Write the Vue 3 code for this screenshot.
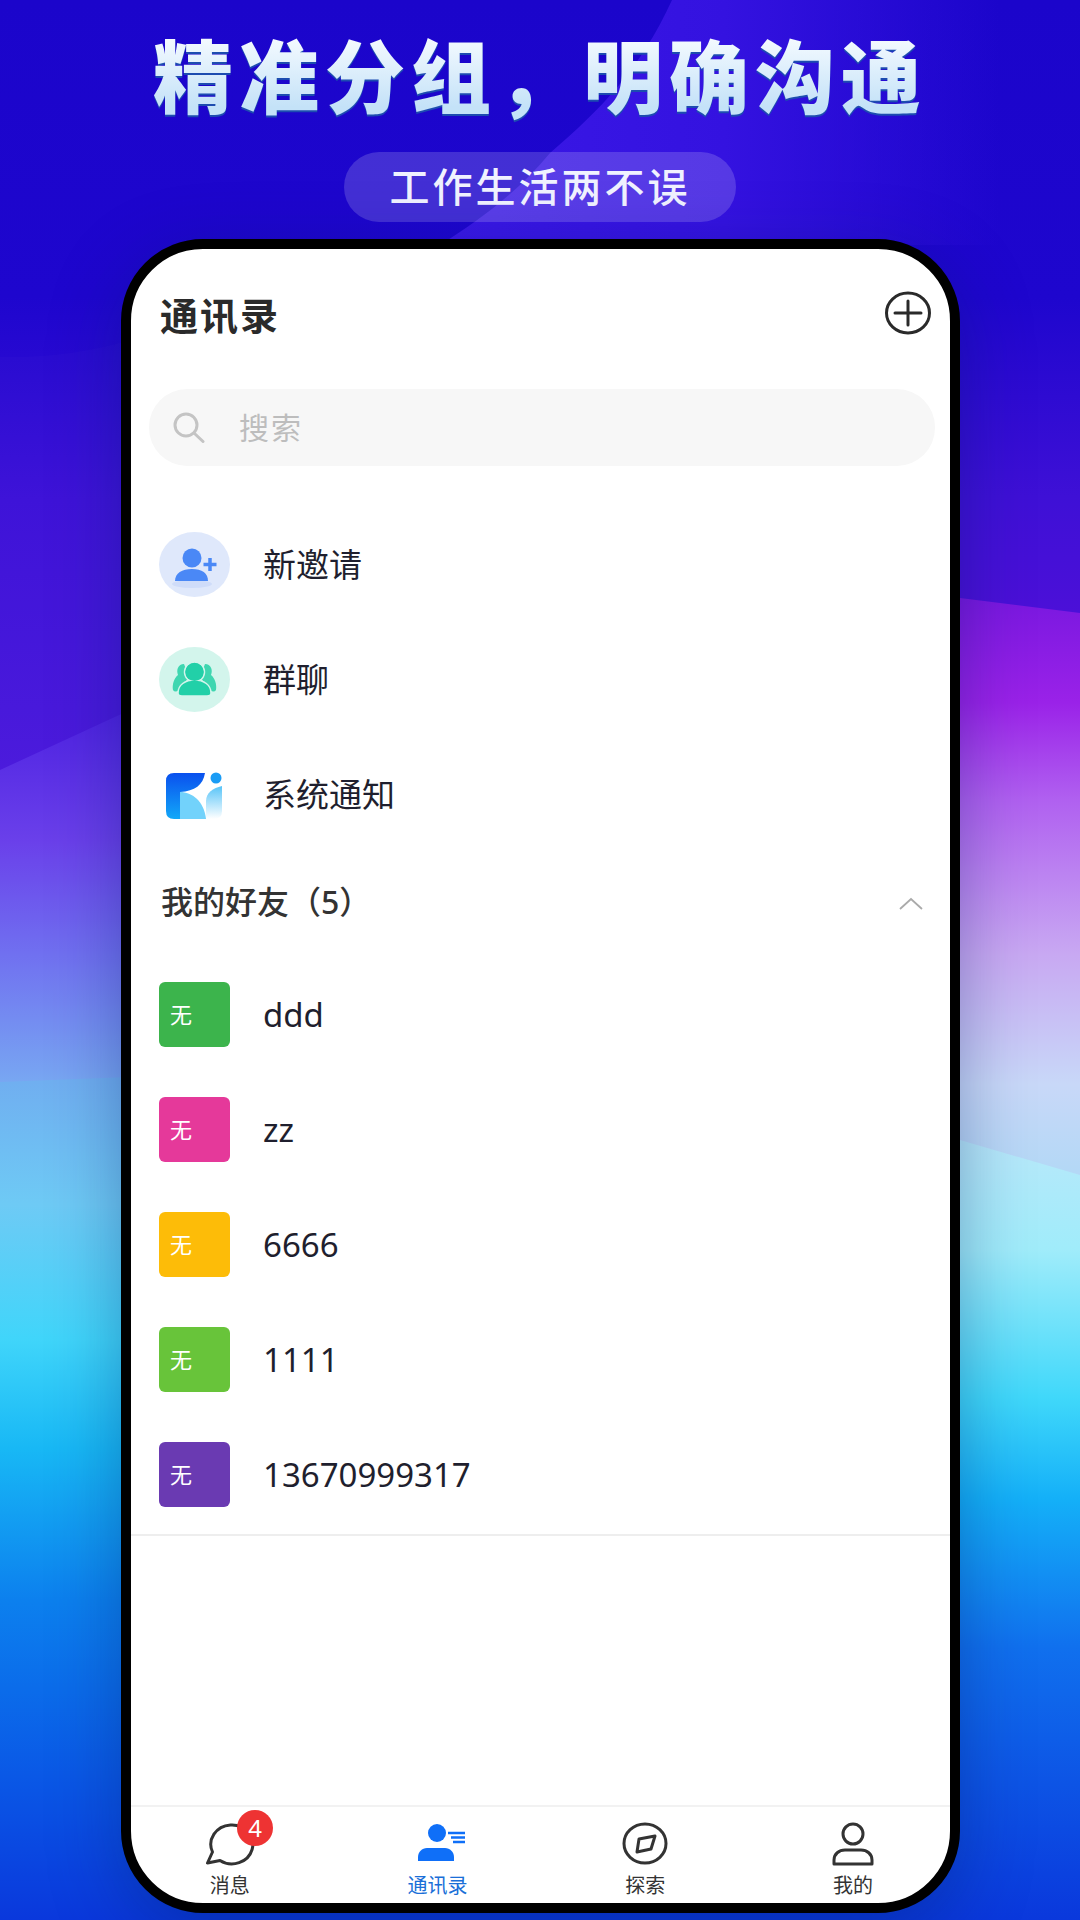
<script setup>
const friends = [
  { name: 'ddd', color: '#3cb44c' },
  { name: 'zz', color: '#e5399a' },
  { name: '6666', color: '#fdbc08' },
  { name: '1111', color: '#68c43a' },
  { name: '13670999317', color: '#6a3ab2' },
]
</script>

<template>
  <div class="page">
    <svg class="backdrop" width="1080" height="1920" viewBox="0 0 1080 1920">
      <defs>
        <clipPath id="leftSide"><rect x="0" y="0" width="540" height="1920" /></clipPath>
        <clipPath id="rightSide"><rect x="540" y="0" width="540" height="1920" /></clipPath>
        <linearGradient id="topL" gradientUnits="userSpaceOnUse" x1="0" y1="0" x2="0" y2="780">
          <stop offset="0" stop-color="#1b05cb" />
          <stop offset="0.38" stop-color="#1e06ce" />
          <stop offset="0.64" stop-color="#3b10d8" />
          <stop offset="1" stop-color="#4a18dc" />
        </linearGradient>
        <linearGradient id="midL" gradientUnits="userSpaceOnUse" x1="0" y1="710" x2="0" y2="1085">
          <stop offset="0" stop-color="#4e22e2" />
          <stop offset="0.35" stop-color="#6a40ea" />
          <stop offset="0.65" stop-color="#7070f0" />
          <stop offset="1" stop-color="#78a8f2" />
        </linearGradient>
        <linearGradient id="botL" gradientUnits="userSpaceOnUse" x1="0" y1="1078" x2="0" y2="1920">
          <stop offset="0" stop-color="#70aef0" />
          <stop offset="0.15" stop-color="#6ecaf5" />
          <stop offset="0.31" stop-color="#40d5fa" />
          <stop offset="0.44" stop-color="#18b8f5" />
          <stop offset="0.62" stop-color="#0c80ee" />
          <stop offset="0.83" stop-color="#0a58e6" />
          <stop offset="1" stop-color="#0a38dc" />
        </linearGradient>
        <linearGradient id="topR" gradientUnits="userSpaceOnUse" x1="0" y1="0" x2="0" y2="620">
          <stop offset="0" stop-color="#1b05cb" />
          <stop offset="0.48" stop-color="#1e06ce" />
          <stop offset="0.8" stop-color="#3e10d6" />
          <stop offset="1" stop-color="#4c10d8" />
        </linearGradient>
        <linearGradient id="midR" gradientUnits="userSpaceOnUse" x1="0" y1="600" x2="0" y2="1170">
          <stop offset="0" stop-color="#7a18e0" />
          <stop offset="0.18" stop-color="#9a22e8" />
          <stop offset="0.35" stop-color="#b060f0" />
          <stop offset="0.62" stop-color="#c8a8f2" />
          <stop offset="0.85" stop-color="#c8d8f8" />
          <stop offset="1" stop-color="#b4d8f6" />
        </linearGradient>
        <linearGradient id="botR" gradientUnits="userSpaceOnUse" x1="0" y1="1140" x2="0" y2="1920">
          <stop offset="0" stop-color="#b8e8fa" />
          <stop offset="0.14" stop-color="#a0ecfa" />
          <stop offset="0.33" stop-color="#40d8fa" />
          <stop offset="0.46" stop-color="#14b0f8" />
          <stop offset="0.65" stop-color="#1070ee" />
          <stop offset="1" stop-color="#0a38dc" />
        </linearGradient>
        <linearGradient id="wedge" gradientUnits="userSpaceOnUse" x1="450" y1="0" x2="1000" y2="0">
          <stop offset="0" stop-color="#3a18e6" />
          <stop offset="0.5" stop-color="#3412e0" />
          <stop offset="1" stop-color="#3412e0" stop-opacity="0" />
        </linearGradient>
      </defs>
      <g clip-path="url(#leftSide)">
        <rect width="1080" height="1920" fill="url(#topL)" />
        <path d="M0 357 Q70 358 130 340 V780 H0 Z" fill="#ffffff" opacity="0.015" />
        <path d="M0 770 L130 710 L540 650 V1920 H0 Z" fill="url(#midL)" />
        <path d="M0 1082 L130 1077 L540 1085 V1920 H0 Z" fill="url(#botL)" />
      </g>
      <g clip-path="url(#rightSide)">
        <rect width="1080" height="1920" fill="url(#topR)" />
        <path d="M540 600 L960 598 L1080 613 V1920 H540 Z" fill="url(#midR)" />
        <path d="M540 1100 L960 1140 L1080 1175 V1920 H540 Z" fill="url(#botR)" />
      </g>
      <path d="M672 0 C640 70 600 110 550 153 C520 190 480 220 440 245 H1000 V0 Z" fill="url(#wedge)" />
    </svg>

    <header class="promo">
      <h1 class="headline">精准分组，明确沟通</h1>
      <div class="pill">工作生活两不误</div>
    </header>

    <div class="phone">
      <div class="topbar">
        <span class="title">通讯录</span>
        <svg width="46" height="46" viewBox="0 0 46 46" fill="none" stroke="#2a2a2a" stroke-width="3">
          <ellipse cx="23" cy="22" rx="21.5" ry="20" />
          <path d="M10 22H36M23 10V34" stroke-linecap="round" />
        </svg>
      </div>

      <div class="search">
        <svg width="32" height="31" viewBox="0 0 32 31" fill="none" stroke="#c4c4c4" stroke-width="3">
          <circle cx="13" cy="13" r="11" />
          <path d="M21 21L30 29.5" stroke-linecap="round" />
        </svg>
        <span>搜索</span>
      </div>

      <div class="list first">
        <div class="row">
          <svg class="tile" width="71" height="65" viewBox="0 0 71 65">
            <ellipse cx="35.5" cy="32.5" rx="35.5" ry="32.5" fill="#dfe8fb" />
            <ellipse cx="33" cy="52" rx="20" ry="4" fill="#cfdcf9" />
            <circle cx="33" cy="26" r="9.5" fill="#4a88f6" />
            <path d="M16 49C16 41 23 37 33 37S49 41 49 49Z" fill="#4a88f6" />
            <path d="M51 26V39M44.5 32.5H57.5" stroke="#4a88f6" stroke-width="3.5" />
          </svg>
          <span class="name cjk">新邀请</span>
        </div>
        <div class="row">
          <svg class="tile" width="71" height="65" viewBox="0 0 71 65">
            <ellipse cx="35.5" cy="32.5" rx="35.5" ry="32.5" fill="#d3f5ec" />
            <path d="M25 17C19 17 17 23 19 28C15 31 13 38 14 43Q16 46 20 43L30 30Z" fill="#3fd6b0" />
            <path d="M46 17C52 17 54 23 52 28C56 31 58 38 57 43Q55 46 51 43L41 30Z" fill="#3fd6b0" />
            <circle cx="35.5" cy="25" r="10" fill="#22d0a8" stroke="#d3f5ec" stroke-width="1.5" />
            <path d="M19 46C19 38 26 33 35.5 33S52 38 52 46Q52 49 48 49H23Q19 49 19 46Z" fill="#22d0a8" stroke="#d3f5ec" stroke-width="1.5" />
            <circle cx="35.5" cy="25" r="9" fill="#22d0a8" />
          </svg>
          <span class="name cjk">群聊</span>
        </div>
        <div class="row">
          <svg class="tile logo" width="71" height="65" viewBox="0 0 71 65">
            <defs>
              <linearGradient id="logoBlue" x1="0" y1="0" x2="0" y2="1">
                <stop offset="0" stop-color="#0a50ee" />
                <stop offset="1" stop-color="#12a8f8" />
              </linearGradient>
              <linearGradient id="logoLight" x1="0" y1="0" x2="0" y2="1">
                <stop offset="0" stop-color="#58c4f8" />
                <stop offset="1" stop-color="#ffffff" />
              </linearGradient>
            </defs>
            <path d="M7 19Q7 11 15 11H46C44 23 36 29 21 30V57H15Q7 57 7 49Z" fill="url(#logoBlue)" />
            <path d="M21 30C33 30 45 39 47 57H21Z" fill="#72d2fb" />
            <path d="M47 57V39C47 31 54 26 63 24V49Q63 57 55 57Z" fill="url(#logoLight)" />
            <circle cx="57" cy="16" r="5.5" fill="#1a9cf5" />
          </svg>
          <span class="name cjk">系统通知</span>
        </div>
      </div>

      <div class="group">
        <span class="group-title">我的好友（5）</span>
        <svg class="chevron" width="26" height="14" viewBox="0 0 26 14" fill="none" stroke="#aaaaaa" stroke-width="1.8">
          <path d="M2 12L13 2L24 12" />
        </svg>
      </div>

      <div class="list friends">
        <div v-for="f in friends" :key="f.name" class="row">
          <div class="avatar" :style="{ background: f.color }">无</div>
          <span class="name">{{ f.name }}</span>
        </div>
      </div>

      <div class="spacer"></div>

      <nav class="tabs">
        <div class="tab">
          <svg width="60" height="44" viewBox="0 0 60 44" fill="none" stroke="#333333" stroke-width="3" stroke-linejoin="round">
            <path d="M12.5 30L7.5 41L20 38.5A21 19.5 0 1 0 12.5 30Z" />
          </svg>
          <span class="badge">4</span>
          <span class="label">消息</span>
        </div>
        <div class="tab active">
          <svg width="60" height="44" viewBox="0 0 60 44" fill="#0f6ff8">
            <circle cx="29" cy="11" r="9" />
            <path d="M10 39V35C10 30 14 26 19 26H37C42 26 46 30 46 35V39Z" />
            <path d="M40 11H57M43 15.5H57M45 20H57" stroke="#0f6ff8" stroke-width="2.6" />
          </svg>
          <span class="label">通讯录</span>
        </div>
        <div class="tab">
          <svg width="60" height="44" viewBox="0 0 60 44" fill="none" stroke="#333333" stroke-width="3" stroke-linejoin="round">
            <ellipse cx="30" cy="21.5" rx="21" ry="19.5" />
            <path d="M24 17L40 14L36 27L22 30Z" />
          </svg>
          <span class="label">探索</span>
        </div>
        <div class="tab">
          <svg width="60" height="44" viewBox="0 0 60 44" fill="none" stroke="#333333" stroke-width="3" stroke-linejoin="round">
            <circle cx="30" cy="12" r="10" />
            <path d="M11 42V38C11 32 16 28 22 28H38C44 28 49 32 49 38V42Z" />
          </svg>
          <span class="label">我的</span>
        </div>
      </nav>
    </div>
  </div>
</template>

<style scoped>
.page {
  position: relative;
  width: 1080px;
  height: 1920px;
  overflow: hidden;
  font-family: "Noto Sans", "Noto Sans CJK SC", sans-serif;
}

.backdrop {
  position: absolute;
  top: 0;
  left: 0;
}

.promo {
  position: relative;
  height: 239px;
  display: flex;
  flex-direction: column;
  align-items: center;
}

.headline {
  margin: 15px 0 0;
  height: 115px;
  font-family: "Noto Sans CJK SC", sans-serif;
  font-size: 80px;
  line-height: 115px;
  font-weight: 900;
  letter-spacing: 6px;
  white-space: nowrap;
  background: linear-gradient(180deg, #f4faff 20%, #c4e2f8 80%);
  -webkit-background-clip: text;
  background-clip: text;
  color: transparent;
  filter: drop-shadow(0 2px 0 #1d4cb0);
}

.pill {
  margin-top: 22px;
  width: 392px;
  height: 70px;
  box-sizing: border-box;
  padding-bottom: 3px;
  border-radius: 35px;
  background: rgba(255, 255, 255, 0.17);
  color: #f0f2ff;
  font-family: "Noto Sans CJK SC", sans-serif;
  font-size: 40px;
  letter-spacing: 3px;
  line-height: 66px;
  text-align: center;
  font-weight: 500;
}

.phone {
  position: relative;
  margin-left: 121px;
  width: 839px;
  height: 1674px;
  box-sizing: border-box;
  border: 10px solid #000;
  border-radius: 82px;
  background: #fff;
  box-shadow: 0 20px 70px rgba(0, 30, 100, 0.35);
  overflow: hidden;
  display: flex;
  flex-direction: column;
}

.topbar {
  height: 130px;
  flex: none;
  display: flex;
  align-items: center;
  justify-content: space-between;
  padding: 0 19px 0 29px;
}

.title {
  padding-bottom: 2px;
  font-size: 38px;
  font-weight: 700;
  letter-spacing: 2px;
  color: #2a2a2a;
}

.search {
  flex: none;
  margin: 10px 15px 0 18px;
  height: 77px;
  border-radius: 38px;
  background: #f7f7f7;
  display: flex;
  align-items: center;
  padding-left: 24px;
  gap: 34px;
  color: #bdbdbd;
  font-size: 30px;
  letter-spacing: 2px;
}

.search span {
  padding-bottom: 4px;
}

.list {
  flex: none;
}

.first {
  margin-top: 41px;
}

.friends {
  margin-top: 5px;
  padding-bottom: 2px;
  border-bottom: 2px solid #eeeeee;
}

.row {
  height: 115px;
  display: flex;
  align-items: center;
  padding-left: 28px;
}

.tile {
  flex: none;
}

.name {
  margin-left: 33px;
  font-size: 33px;
  color: #1f1f2e;
}

.cjk {
  padding-bottom: 4px;
}

.avatar {
  flex: none;
  width: 71px;
  height: 65px;
  box-sizing: border-box;
  border-radius: 6px;
  padding-left: 11px;
  color: #fff;
  font-size: 22px;
  line-height: 65px;
}

.group {
  flex: none;
  height: 100px;
  display: flex;
  align-items: center;
  justify-content: space-between;
  padding: 0 26px 0 30px;
  font-size: 32px;
  color: #333;
}

.group-title {
  padding-bottom: 4px;
  font-weight: 500;
}

.chevron {
  margin-top: 4px;
}

.spacer {
  flex: 1;
}

.tabs {
  flex: none;
  height: 98px;
  box-sizing: border-box;
  margin-left: -5px;
  width: 831px;
  display: flex;
  border-top: 2px solid #f2f2f2;
}

.tab {
  position: relative;
  flex: 0 0 207.7px;
  display: flex;
  flex-direction: column;
  align-items: center;
  padding-top: 15px;
}

.label {
  margin-top: 6px;
  font-size: 20px;
  line-height: 28px;
  color: #333;
}

.active .label {
  color: #1a6fd8;
}

.badge {
  position: absolute;
  top: 3px;
  left: 111px;
  width: 36px;
  height: 36px;
  border-radius: 50%;
  background: #ee3333;
  color: #fff;
  font-size: 24px;
  line-height: 36px;
  text-align: center;
}
</style>

<style>
body {
  margin: 0;
}
</style>
